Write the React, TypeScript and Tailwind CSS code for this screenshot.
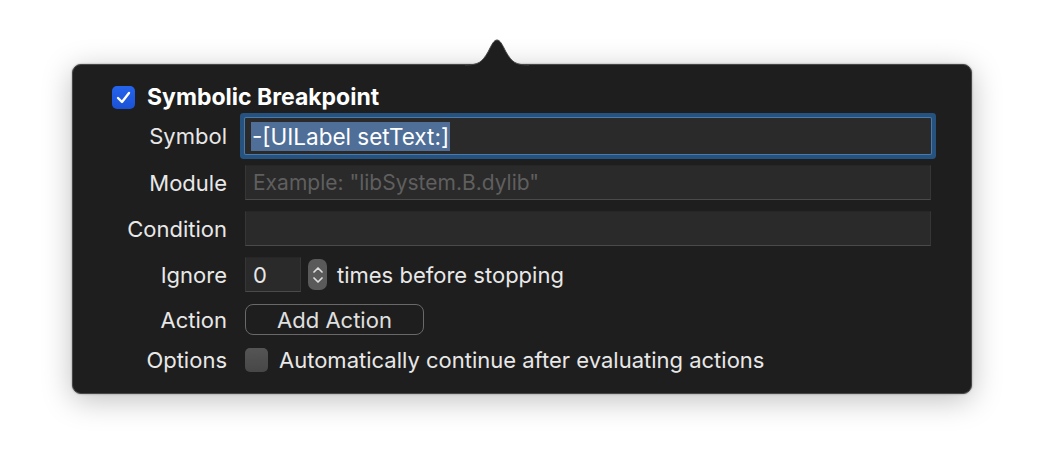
import React from 'react';

const font = { fontFamily: 'Inter, "Noto Sans", sans-serif' };

const Label: React.FC<{ children: React.ReactNode }> = ({ children }) => (
  <div className="w-[155px] shrink-0 pr-[1px] text-right text-[22px] text-[#e8e8e8] leading-none">{children}</div>
);

const fieldCls =
  'h-[35px] bg-[#2a2a2a] border border-[#363636] border-t-[#262626] border-b-[#4a4a4a]';

export default function App() {
  return (
    <div className="w-[1044px] h-[474px] bg-white pt-[64px] pl-[72px]" style={font}>
      <div className="relative w-[900px] h-[330px] rounded-[9px] bg-[#1e1e1e] border border-[#474747] shadow-[0_6px_30px_rgba(0,0,0,0.25),0_0_2px_rgba(0,0,0,0.4)]">
        {/* popover arrow */}
        <svg
          className="absolute left-[392px] top-[-27px]"
          width="64"
          height="29"
          viewBox="0 0 64 29"
        >
          <path
            d="M0 27 C 14 27, 17 24, 23 14 C 27 6, 29 2, 32 2 C 35 2, 37 6, 41 14 C 47 24, 50 27, 64 27 L 64 29 L 0 29 Z"
            fill="#1e1e1e"
          />
          <path
            d="M0 27 C 14 27, 17 24, 23 14 C 27 6, 29 2, 32 2 C 35 2, 37 6, 41 14 C 47 24, 50 27, 64 27"
            fill="none"
            stroke="#474747"
            strokeWidth="1"
          />
        </svg>

        <div className="flex flex-col pt-[21px]">
          {/* title */}
          <div className="flex items-center h-[23px] pl-[39px] gap-[12px]">
            <div className="w-[23px] h-[23px] rounded-[5px] bg-gradient-to-b from-[#2564ec] to-[#1a52d6] flex items-center justify-center">
              <svg width="15" height="13" viewBox="0 0 15 13">
                <path d="M2 7 L6 11 L13 2" fill="none" stroke="white" strokeWidth="2.4" strokeLinecap="round" strokeLinejoin="round" />
              </svg>
            </div>
            <span className="text-[23px] font-bold text-white leading-none">Symbolic Breakpoint</span>
          </div>

          {/* symbol */}
          <div className="flex items-center gap-[17px] mt-[9px]">
            <Label>Symbol</Label>
            <div className="w-[686px] h-[36px] bg-[#2a2a2a] rounded-[1px] shadow-[0_0_0_1px_#4a7aac,0_0_0_5px_#26527f] flex items-center pl-[6px]">
              <span className="bg-[#4f6f98] text-white text-[22.5px] leading-[29px] px-[1px]">-[UILabel setText:]</span>
            </div>
          </div>

          {/* module */}
          <div className="flex items-center gap-[17px] mt-[11px]">
            <Label>Module</Label>
            <div className={`w-[686px] ${fieldCls} flex items-center pl-[7px]`}>
              <span className="text-[21px] text-[#5f5f5f] leading-none">Example: "libSystem.B.dylib"</span>
            </div>
          </div>

          {/* condition */}
          <div className="flex items-center gap-[17px] mt-[11px]">
            <Label>Condition</Label>
            <div className={`w-[686px] ${fieldCls}`} />
          </div>

          {/* ignore */}
          <div className="flex items-center gap-[17px] mt-[11px]">
            <Label>Ignore</Label>
            <div className="flex items-center">
              <div className={`w-[56px] ${fieldCls} flex items-center pl-[7px]`}>
                <span className="text-[22px] text-[#e8e8e8] leading-none">0</span>
              </div>
              <div className="ml-[7px] w-[19px] h-[31px] rounded-[7px] bg-[#5a5a5a] flex flex-col items-center justify-center gap-[4px]">
                <svg width="12" height="7" viewBox="0 0 12 7">
                  <path d="M2 6 L6 2 L10 6" fill="none" stroke="#dedede" strokeWidth="1.7" strokeLinecap="round" strokeLinejoin="round" />
                </svg>
                <svg width="12" height="7" viewBox="0 0 12 7">
                  <path d="M2 1 L6 5 L10 1" fill="none" stroke="#dedede" strokeWidth="1.7" strokeLinecap="round" strokeLinejoin="round" />
                </svg>
              </div>
              <span className="ml-[10px] text-[22px] text-[#e8e8e8] leading-none">times before stopping</span>
            </div>
          </div>

          {/* action */}
          <div className="flex items-center gap-[17px] mt-[12px]">
            <Label>Action</Label>
            <div className="w-[179px] h-[31px] rounded-[8px] border border-[#696969] flex items-center justify-center">
              <span className="text-[22px] text-[#e0e0e0] leading-none">Add Action</span>
            </div>
          </div>

          {/* options */}
          <div className="flex items-center gap-[17px] mt-[13px]">
            <Label>Options</Label>
            <div className="flex items-center gap-[11px]">
              <div className="w-[23px] h-[24px] rounded-[5px] bg-gradient-to-b from-[#555555] to-[#474747]" />
              <span className="text-[22px] text-[#e8e8e8] leading-none">Automatically continue after evaluating actions</span>
            </div>
          </div>
        </div>
      </div>
    </div>
  );
}
